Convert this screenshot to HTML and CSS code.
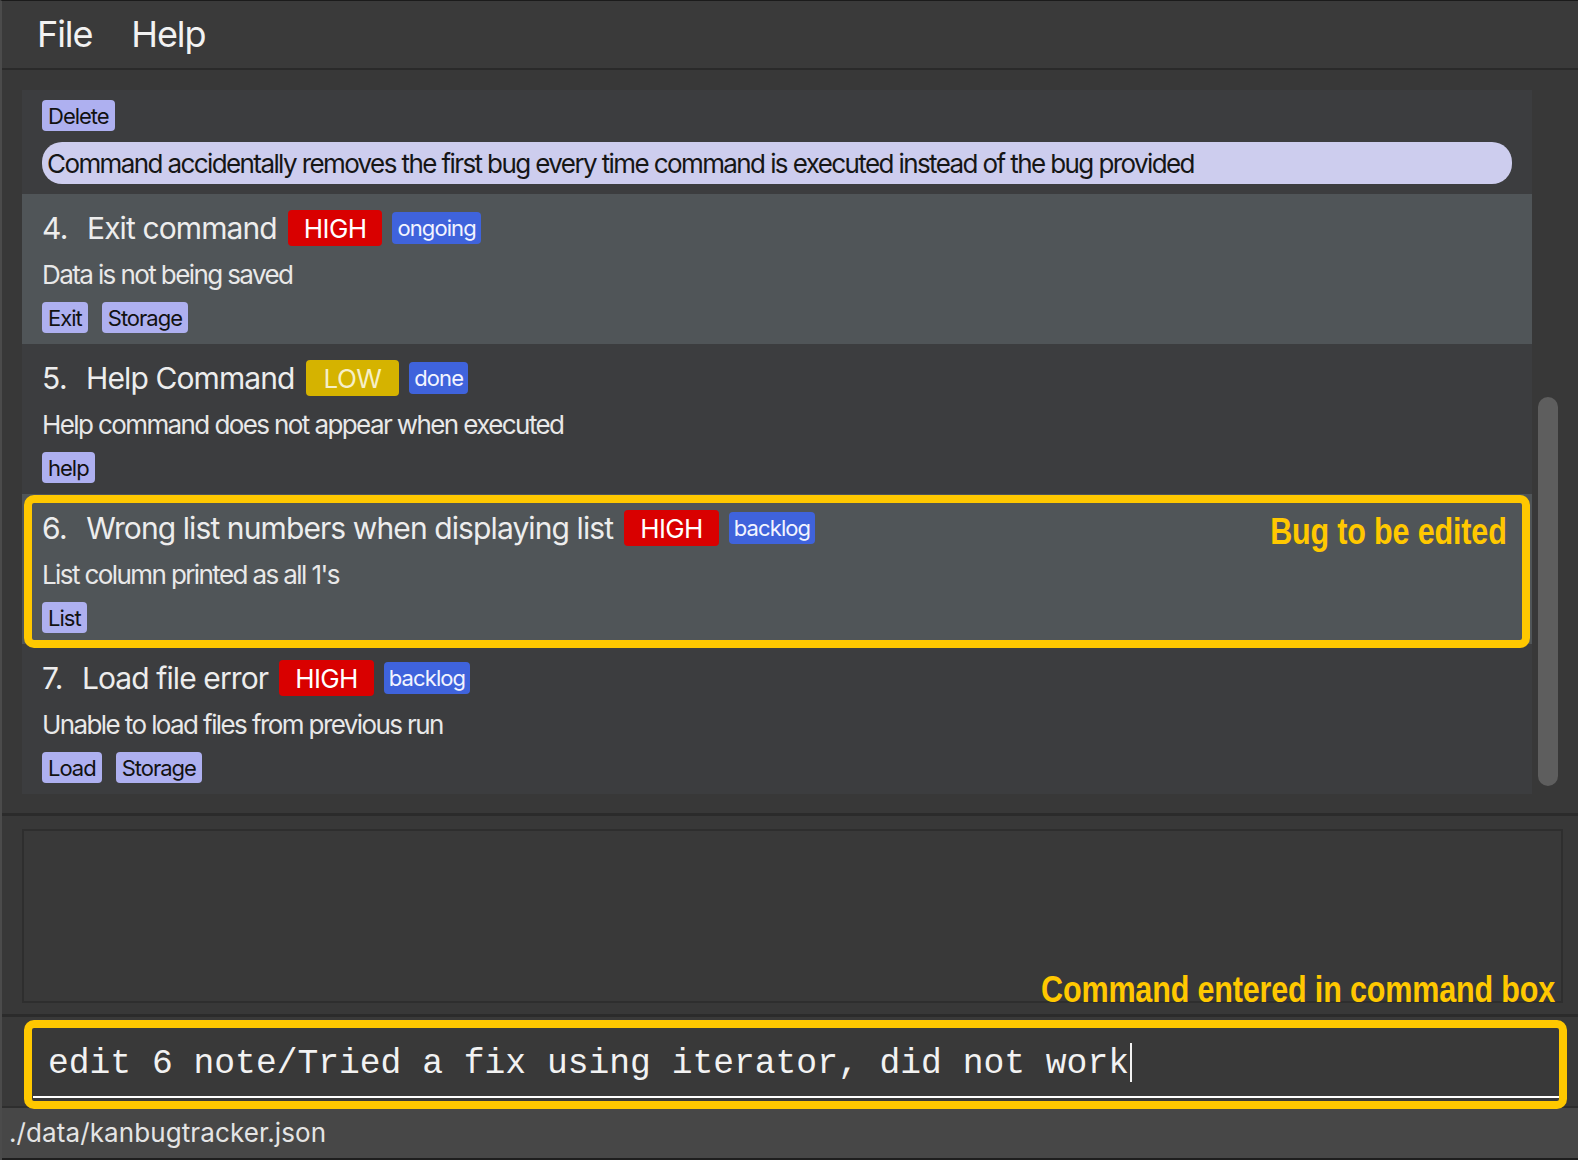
FILE: index.html
```html
<!DOCTYPE html>
<html lang="en">
<head>
<meta charset="utf-8">
<title>KanBugTracker</title>
<link rel="stylesheet" href="styles.css">
</head>
<body>
<div class="window">
  <div class="menubar">
    <span class="menu-item">File</span>
    <span class="menu-item">Help</span>
  </div>

  <div class="list-pane">
    <div class="list">
      <div class="card dark partial">
        <div class="tags"><span class="tag">Delete</span></div>
        <div class="note">Command accidentally removes the first bug every time command is executed instead of the bug provided</div>
      </div>

      <div class="card light">
        <div class="title-row">
          <span class="num">4.</span><span class="title">Exit command</span>
          <span class="prio high">HIGH</span><span class="state">ongoing</span>
        </div>
        <div class="desc">Data is not being saved</div>
        <div class="tags"><span class="tag">Exit</span><span class="tag">Storage</span></div>
      </div>

      <div class="card dark">
        <div class="title-row">
          <span class="num">5.</span><span class="title">Help Command</span>
          <span class="prio low">LOW</span><span class="state">done</span>
        </div>
        <div class="desc">Help command does not appear when executed</div>
        <div class="tags"><span class="tag">help</span></div>
      </div>

      <div class="card light">
        <div class="title-row">
          <span class="num">6.</span><span class="title">Wrong list numbers when displaying list</span>
          <span class="prio high">HIGH</span><span class="state">backlog</span>
        </div>
        <div class="desc">List column printed as all 1's</div>
        <div class="tags"><span class="tag">List</span></div>
      </div>

      <div class="card dark">
        <div class="title-row">
          <span class="num">7.</span><span class="title">Load file error</span>
          <span class="prio high">HIGH</span><span class="state">backlog</span>
        </div>
        <div class="desc">Unable to load files from previous run</div>
        <div class="tags"><span class="tag">Load</span><span class="tag">Storage</span></div>
      </div>
    </div>
    <div class="scroll-col"><div class="thumb"></div></div>
  </div>

  <div class="result-pane">
    <div class="result-box"></div>
  </div>

  <div class="command-pane">
    <div class="command-input">edit 6 note/Tried a fix using iterator, did not work<span class="caret"></span></div>
  </div>

  <div class="status-bar">./data/kanbugtracker.json</div>

  <div class="hl hl-bug"><span class="annot annot-bug">Bug to be edited</span></div>
  <div class="hl hl-cmd"></div>
  <span class="annot annot-cmd">Command entered in command box</span>
</div>
</body>
</html>
```

FILE: styles.css
```css
* { box-sizing: border-box; }

html, body {
  margin: 0;
  padding: 0;
  background: #383838;
}

body {
  font-family: Inter, "Noto Sans", sans-serif;
  color: #ececec;
}

.window {
  position: relative;
  width: 1578px;
  height: 1160px;
  display: flex;
  flex-direction: column;
  border-top: 1px solid #1b1b1b;
  border-left: 2px solid #4b4b4b;
  background: #383838;
  overflow: hidden;
}

/* menu */
.menubar {
  height: 69px;
  flex: none;
  display: flex;
  align-items: center;
  gap: 39px;
  padding: 0 0 2px 35px;
  background: #3a3a3a;
  border-bottom: 2px solid #2a2a2a;
}

.menu-item {
  font-size: 36px;
  letter-spacing: -1.1px;
  color: #f2f2f2;
}

/* list */
.list-pane {
  height: 743px;
  flex: none;
  display: flex;
  padding: 20px 0 0 20px;
  background: #383838;
}

.list {
  width: 1510px;
  height: 704px;
  overflow: hidden;
  display: flex;
  flex-direction: column;
  background: #3c3d3f;
}

.card {
  height: 150px;
  flex: none;
  padding: 16px 20px 0 20px;
  display: flex;
  flex-direction: column;
}

.card.dark { background: #3c3d3f; }
.card.light { background: #505558; }

.card.partial {
  height: 104px;
  padding-top: 10px;
}

.title-row {
  height: 36px;
  display: flex;
  align-items: center;
  margin-bottom: 13px;
}

.num {
  font-size: 30px;
  letter-spacing: -0.5px;
  margin-right: 19px;
  color: #ededed;
}

.title {
  font-size: 30px;
  letter-spacing: -0.9px;
  margin-right: 11px;
  color: #ededed;
  white-space: nowrap;
}

.prio {
  height: 36px;
  display: flex;
  align-items: center;
  padding: 0 16px;
  border-radius: 4px;
  font-size: 26px;
  letter-spacing: -0.6px;
  margin-right: 10px;
}

.prio.high { background: #d90000; color: #ffffff; }
.prio.low { background: #d5b300; color: #f6efc8; padding: 0 18px; }

.state {
  height: 32px;
  display: flex;
  align-items: center;
  padding: 0 5px;
  border-radius: 4px;
  background: #3f63dc;
  color: #f2f4ff;
  font-size: 22px;
  letter-spacing: -0.9px;
}

.desc {
  font-size: 26px;
  line-height: 32px;
  letter-spacing: -1.6px;
  color: #e8e8e8;
  margin-bottom: 11px;
  white-space: nowrap;
}

.tags {
  display: flex;
  gap: 14px;
}

.tag {
  height: 31px;
  display: flex;
  align-items: center;
  padding: 0 6px;
  border-radius: 4px;
  background: #aeb0f0;
  color: #121212;
  font-size: 22px;
  letter-spacing: -1px;
}

.note {
  margin-top: 11px;
  height: 42px;
  display: flex;
  align-items: center;
  padding: 0 5px;
  border-radius: 20px;
  background: #cdcdee;
  color: #161616;
  font-size: 26px;
  letter-spacing: -1.6px;
  white-space: nowrap;
}

.scroll-col {
  width: 46px;
  padding: 307px 0 0 6px;
}

.thumb {
  width: 20px;
  height: 389px;
  border-radius: 10px;
  background: #5e5e5e;
}

/* result */
.result-pane {
  height: 201px;
  flex: none;
  padding: 13px 15px 11px 20px;
  border-top: 3px solid #2b2b2b;
  background: #383838;
}

.result-box {
  height: 100%;
  border: 2px solid #2e2e2e;
  background: #393939;
}

/* command */
.command-pane {
  height: 92px;
  flex: none;
  padding: 0 16px 0 31px;
  border-top: 3px solid #2b2b2b;
  background: #393939;
}

.command-input {
  padding: 26px 0 12px 15px;
  line-height: 40px;
  font-family: "Liberation Mono", "DejaVu Sans Mono", monospace;
  font-size: 34.65px;
  color: #f2f2f2;
  border-bottom: 2px solid #ffffff;
  white-space: pre;
}

.caret {
  display: inline-block;
  width: 2px;
  height: 39px;
  margin-left: 1px;
  background: #f2f2f2;
  vertical-align: -9px;
}

/* status */
.status-bar {
  flex: 1;
  padding: 10px 0 0 7px;
  border-top: 2px solid #2e2e2e;
  background: #474747;
  font-size: 26px;
  line-height: 30px;
  letter-spacing: 0.1px;
  color: #e4e4e4;
  border-bottom: 2px solid #1e1e1e;
}

/* annotation overlays */
.hl {
  position: absolute;
  border: 8px solid #ffc800;
  border-radius: 10px;
}

.hl-bug {
  left: 22px;
  top: 494px;
  width: 1506px;
  height: 153px;
}

.hl-cmd {
  left: 22px;
  top: 1019px;
  width: 1543px;
  height: 89px;
}

.annot {
  position: absolute;
  font-family: "Liberation Sans", Arial, sans-serif;
  font-weight: bold;
  font-size: 37px;
  line-height: 40px;
  color: #ffc800;
  white-space: nowrap;
  transform: scaleX(0.825);
  transform-origin: right center;
  letter-spacing: -0.2px;
}

.annot-bug {
  right: 15px;
  top: 9px;
}

.annot-cmd {
  right: 23px;
  top: 969px;
}
```
